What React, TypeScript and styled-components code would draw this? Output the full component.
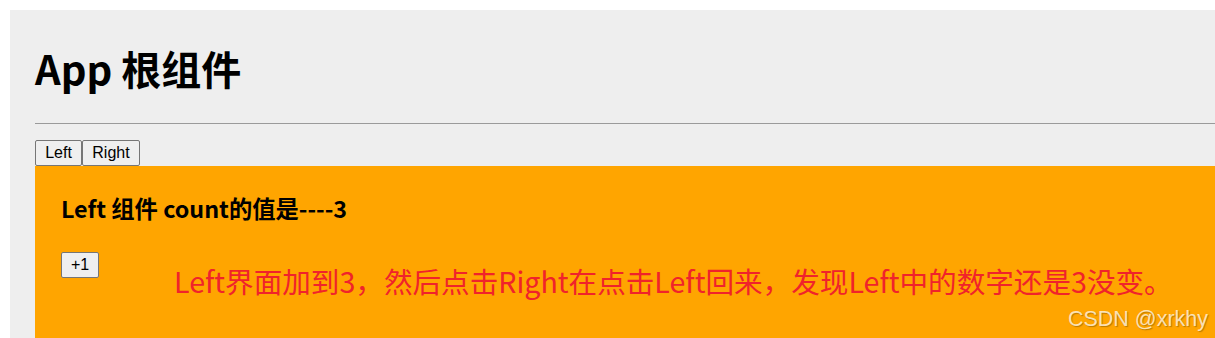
import React, { useState } from "react";
import styled, { createGlobalStyle } from "styled-components";

const GlobalStyle = createGlobalStyle`
  html, body {
    margin: 0;
    padding: 0;
    background: #ffffff;
    overflow: hidden;
  }
  body {
    font-family: "Noto Sans CJK SC", "Noto Sans", sans-serif;
  }
`;

const Page = styled.div`
  position: relative;
  width: 1215px;
  height: 338px;
  overflow: hidden;
`;

const Panel = styled.div`
  margin: 10px 0 0 10px;
  padding: 0 0 0 25px;
  background: #eeeeee;
  height: 400px;
  display: flex;
  flex-direction: column;
`;

const Title = styled.h1`
  margin: 34px 0 0 0;
  font-family: "Noto Sans CJK SC", sans-serif;
  font-size: 40px;
  font-weight: 700;
  line-height: 48px;
  color: #000;
`;

const Rule = styled.hr`
  margin: 31px 0 0 0;
  border: 0;
  border-top: 1px solid #9a9a9a;
  height: 0;
`;

const Tabs = styled.div`
  display: flex;
  margin-top: 16px;
`;

const NativeButton = styled.button<{ $w: number; $size?: number }>`
  box-sizing: border-box;
  width: ${(p) => p.$w}px;
  height: 26px;
  padding: 0;
  font-family: "Liberation Sans", Arial, sans-serif;
  font-size: ${(p) => p.$size ?? 16}px;
  color: #000;
  background: #efefef;
  border: 1px solid #767676;
  border-radius: 2px;
  display: flex;
  align-items: center;
  justify-content: center;
`;

const OrangeBox = styled.section`
  background: #ffa500;
  padding: 28px 0 0 26px;
  flex: 1;
`;

const CountHeading = styled.h3`
  margin: 0;
  font-family: "Noto Sans CJK SC", sans-serif;
  font-size: 23.3px;
  font-weight: 700;
  line-height: 28px;
  color: #000;
`;

const ActionRow = styled.div`
  display: flex;
  align-items: flex-start;
  margin-top: 30px;
`;

const Note = styled.p`
  margin: 9px 0 0 75px;
  font-family: "Noto Sans CJK SC", sans-serif;
  font-size: 28.6px;
  line-height: 40px;
  color: #f0232b;
  white-space: nowrap;
`;

const Watermark = styled.div`
  position: absolute;
  right: 7px;
  bottom: 6px;
  font-family: "Liberation Sans", Arial, sans-serif;
  font-size: 21.5px;
  color: rgba(255, 240, 215, 0.85);
  text-shadow: 1px 1px 1px rgba(120, 80, 0, 0.5);
`;

export default function App() {
  const [count, setCount] = useState(3);
  return (
    <>
      <GlobalStyle />
      <Page>
        <Panel>
          <Title>App 根组件</Title>
          <Rule />
          <Tabs>
            <NativeButton $w={47}>Left</NativeButton>
            <NativeButton $w={58}>Right</NativeButton>
          </Tabs>
          <OrangeBox>
            <CountHeading>Left 组件 count的值是----{count}</CountHeading>
            <ActionRow>
              <NativeButton $w={38} $size={16} onClick={() => setCount(count + 1)}>
                +1
              </NativeButton>
              <Note>Left界面加到3，然后点击Right在点击Left回来，发现Left中的数字还是3没变。</Note>
            </ActionRow>
          </OrangeBox>
        </Panel>
        <Watermark>CSDN @xrkhy</Watermark>
      </Page>
    </>
  );
}
